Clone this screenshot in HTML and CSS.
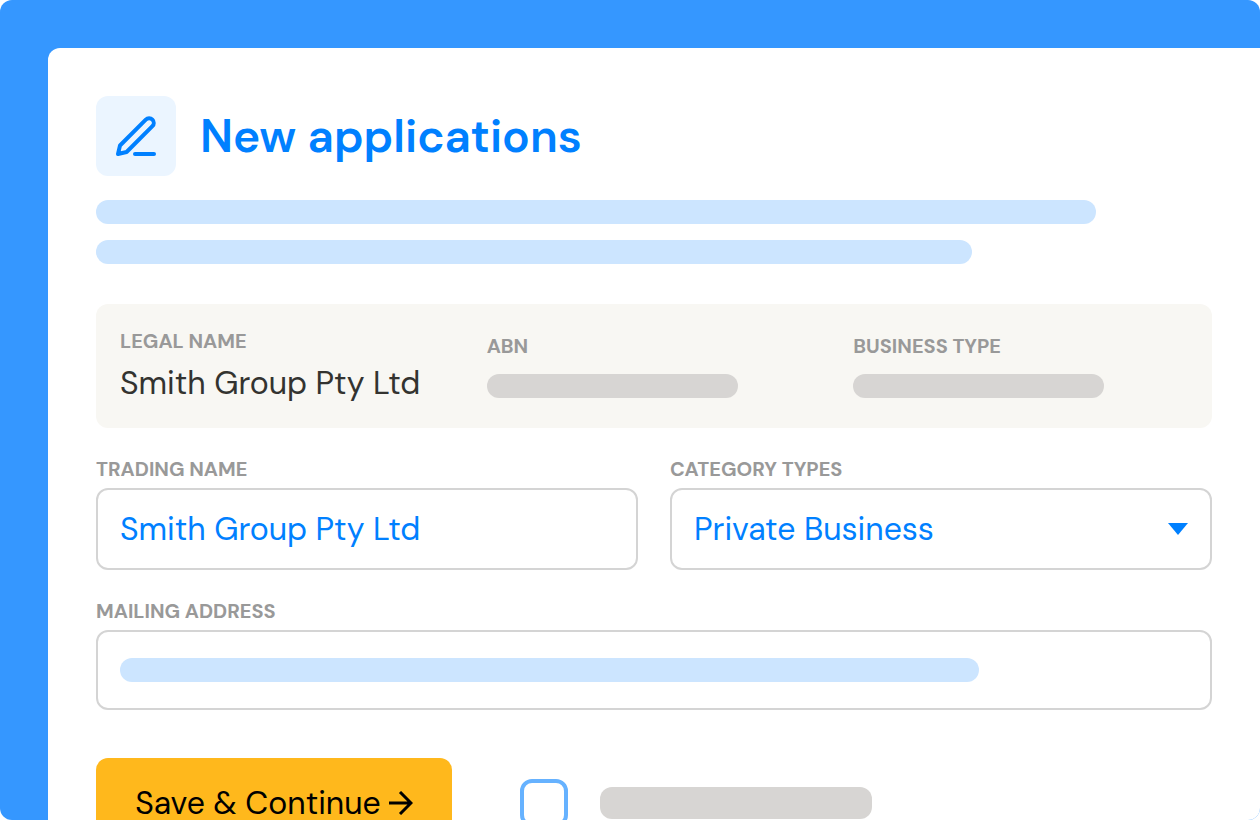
FILE: index.html
```html
<!doctype html>
<html lang="en">
  <head>
    <meta charset="utf-8">
    <title>New applications</title>
    <link rel="stylesheet" href="styles.css">
  </head>
  <body>
    <div class="frame">
      <main class="sheet">
        <header class="header">
          <div class="header-icon">
            <svg width="48" height="48" viewBox="0 0 48 48" fill="none" stroke="currentColor" stroke-width="4" stroke-linecap="round" stroke-linejoin="round">
              <path d="M6 42L8 33.5L33.8 7.6A4.5 4.5 0 0 1 40.4 14.2L14.6 40Z"/>
              <path d="M23 42H42"/>
            </svg>
          </div>
          <h1>New applications</h1>
        </header>

        <div class="intro">
          <div class="bar bar-intro-1"></div>
          <div class="bar bar-intro-2"></div>
        </div>

        <dl class="summary">
          <div class="summary-item">
            <dt class="label">Legal name</dt>
            <dd>Smith Group Pty Ltd</dd>
          </div>
          <div class="summary-item summary-empty">
            <dt class="label">ABN</dt>
            <dd class="bar bar-grey"></dd>
          </div>
          <div class="summary-item summary-empty">
            <dt class="label">Business type</dt>
            <dd class="bar bar-grey"></dd>
          </div>
        </dl>

        <form class="form">
          <div class="row">
            <div class="field">
              <label class="label" for="trading-name">Trading name</label>
              <input class="control" id="trading-name" type="text" value="Smith Group Pty Ltd">
            </div>
            <div class="field">
              <label class="label" for="category">Category types</label>
              <div class="control-wrap">
                <select class="control" id="category">
                  <option>Private Business</option>
                </select>
                <svg class="caret" width="20" height="12" viewBox="0 0 20 12"><path d="M0 0H20L10 12Z" fill="currentColor"/></svg>
              </div>
            </div>
          </div>

          <div class="field">
            <label class="label" for="mailing">Mailing address</label>
            <div class="control-wrap">
              <input class="control" id="mailing" type="text">
              <div class="bar bar-over"></div>
            </div>
          </div>

          <div class="actions">
            <button class="save" type="button">
              Save &amp; Continue
              <svg width="24" height="24" viewBox="0 0 24 24" fill="none" stroke="currentColor" stroke-width="3"><path d="M0 12H22M11 1L22 12L11 23"/></svg>
            </button>
            <input class="check" type="checkbox" id="confirm" aria-label="Confirm">
            <label class="bar bar-grey bar-check" for="confirm"></label>
          </div>
        </form>
      </main>
    </div>
  </body>
</html>
```

FILE: styles.css
```css
* {
  box-sizing: border-box;
}
body {
  margin: 0;
  background-color: white;
  color: #333330;
  font-family: 'DM Sans', Inter, sans-serif;
  font-size: 32px;
}
.frame {
  height: 100vh;
  padding: 48px 0 0 48px;
  background-color: #3597ff;
  border-radius: 12px;
  overflow: hidden;
}
.sheet {
  min-height: 100%;
  padding: 48px;
  background-color: white;
  border-top-left-radius: 12px;
}

.header {
  display: flex;
  align-items: center;
  gap: 24px;
  color: #0080ff;
}
.header-icon {
  display: flex;
  align-items: center;
  justify-content: center;
  width: 80px;
  height: 80px;
  background-color: #ebf5ff;
  border-radius: 12px;
}
h1 {
  margin: 0;
  font-size: 46px;
  font-weight: 600;
  line-height: 56px;
}

/* Placeholder bars */
.bar {
  height: 24px;
  background-color: #cce5ff;
  border-radius: 12px;
}
.bar-grey {
  background-color: #d7d5d3;
}
.intro {
  display: flex;
  flex-direction: column;
  gap: 16px;
  margin-top: 24px;
}
.bar-intro-1 {
  width: 89.6%;
}
.bar-intro-2 {
  width: 78.5%;
}

.label {
  color: #999999;
  font-size: 20px;
  font-weight: 700;
  line-height: 24px;
  text-transform: uppercase;
}

.summary {
  display: grid;
  grid-template-columns: repeat(3, 1fr);
  align-items: center;
  gap: 32px;
  margin: 40px 0 29px;
  padding: 25px 24px;
  background-color: #f8f7f3;
  border-radius: 12px;
}
.summary-item {
  display: flex;
  flex-direction: column;
  gap: 10px;
}
.summary-empty {
  gap: 16px;
}
.summary dd {
  margin: 0;
  line-height: 40px;
}
.summary .bar {
  width: 75%;
}

.form {
  display: flex;
  flex-direction: column;
  gap: 29px;
}
.row {
  display: grid;
  grid-template-columns: 1fr 1fr;
  gap: 32px;
}
.field {
  display: flex;
  flex-direction: column;
  gap: 7px;
}
.control-wrap {
  position: relative;
}
.control {
  display: block;
  width: 100%;
  height: 82px;
  padding: 0 22px;
  background-color: white;
  border: 2px solid #d4d4d4;
  border-radius: 12px;
  color: #0080ff;
  font: inherit;
  appearance: none;
}
#mailing {
  height: 80px;
}
.caret {
  position: absolute;
  top: 35px;
  right: 24px;
  color: #0080ff;
}
.bar-over {
  position: absolute;
  top: 28px;
  left: 24px;
  width: 77%;
}

.actions {
  display: flex;
  align-items: center;
  margin-top: 19px;
}
.save {
  display: flex;
  align-items: center;
  justify-content: center;
  gap: 8px;
  width: 356px;
  height: 90px;
  padding: 0;
  background-color: #ffb81c;
  border: none;
  border-radius: 12px;
  color: black;
  font: inherit;
}
.check {
  width: 48px;
  height: 48px;
  margin: 0 32px 0 68px;
  background-color: white;
  border: 4px solid #66b2ff;
  border-radius: 12px;
  appearance: none;
}
.bar-check {
  width: 272px;
  height: 32px;
}
```
